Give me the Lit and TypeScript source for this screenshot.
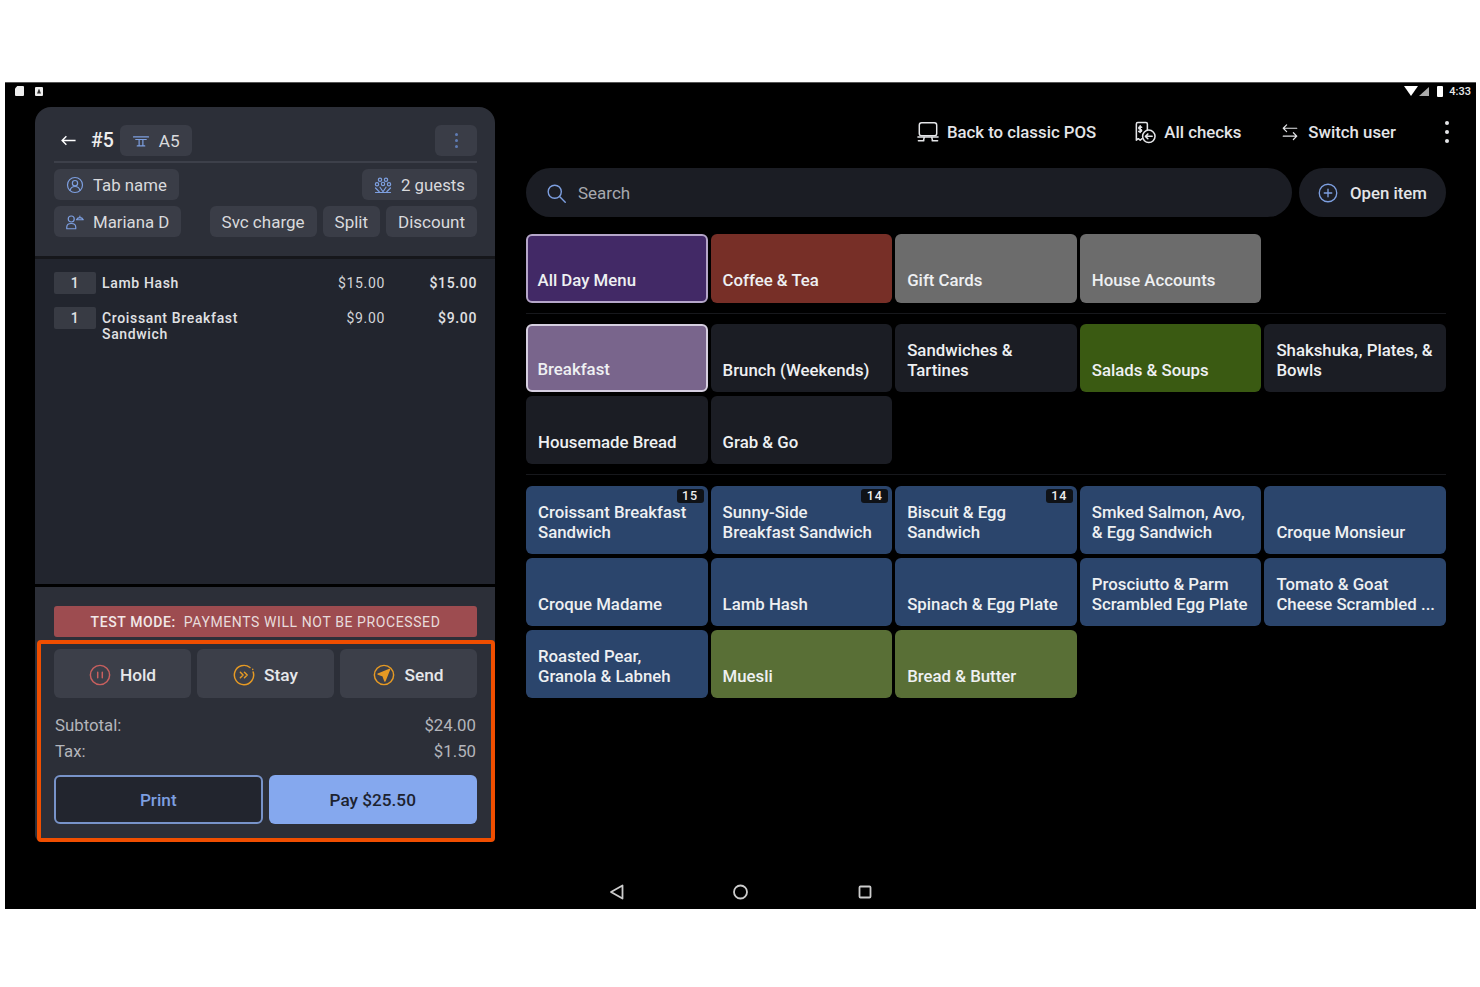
import { LitElement, html, css, svg } from "lit";
import { customElement } from "lit/decorators.js";

const ic = (w: number, body: unknown, cls = "") => html`<svg class="ic ${cls}" width=${w} height=${w} viewBox="0 0 24 24" fill="none" stroke="currentColor" stroke-width="1.6" stroke-linecap="round" stroke-linejoin="round">${body}</svg>`;

const icons = {
  table: svg`<path d="M2 6.500h20M5 10h14M9.500 10v8.500M14.500 10v8.500M7 18.500h10"/>`,
  person: svg`<circle cx="12" cy="12" r="10"/><circle cx="12" cy="9.500" r="3.500"/><path d="M5.500 19c1-3.500 3.500-5 6.500-5s5.500 1.500 6.500 5"/>`,
  guests: svg`<circle cx="8" cy="5" r="2.200"/><circle cx="16" cy="5" r="2.200"/><circle cx="12" cy="10.500" r="2.200"/><circle cx="4" cy="11" r="2.200"/><circle cx="20" cy="11" r="2.200"/><path d="M2 22h20M2 16l5 5M22 16l-5 5M8 15l4 6 4-6"/>`,
  server: svg`<circle cx="7" cy="8" r="4"/><path d="M1 21v-2c0-3 2.500-5 6-5s6 2 6 5v2zM14 9a5 5 0 0 1 9 0zM18.500 4v.5"/>`,
  pause: svg`<circle cx="12" cy="12" r="10.500"/><path d="M9.500 9v6M14.500 9v6"/>`,
  stay: svg`<path d="M18.500 3.800a10.500 10.500 0 1 0 3.500 5"/><path d="M21.500 5.800v.1"/><path d="M8 9l3 3-3 3M12.500 9l3 3-3 3"/>`,
  send: svg`<circle cx="12" cy="12" r="10.500"/><path d="M18 6L5.500 11l5.500 2 2 5.500z" fill="currentColor"/>`,
  monitor: svg`<rect x="2.500" y="2" width="19" height="14" rx="2.500"/><path d="M1 17.500h22M8 17.500l-1 4M16 17.500l1 4M1.500 21.500h6M16.500 21.500h6"/>`,
  checks: svg`<path d="M15 9V3a1.500 1.500 0 0 0-1.500-1.500H5A1.500 1.500 0 0 0 3.500 3v17l2-1.500 2 1.500 2-1.500"/><path d="M9 6.500c-1-.8-3-.5-3 .8 0 1.700 3 1 3 2.700 0 1.300-2 1.500-3 .8M7.500 5v7"/><circle cx="16.500" cy="16" r="6.500"/><path d="M20 16h-7M15.500 13.500L13 16l2.500 2.500"/>`,
  swap: svg`<path d="M3 7h18M7.500 2.500L3 7l4.500 4.500M3 17.500h18M16.500 13L21 17.500 16.500 22"/>`,
  search: svg`<circle cx="10" cy="10" r="7.500"/><path d="M15.500 15.500L22 22"/>`,
  plus: svg`<circle cx="12" cy="12" r="10.500"/><path d="M12 7.500v9M7.500 12h9"/>`,
};

const cats = [
  { t: "All Day Menu", c: "purple sel" },
  { t: "Coffee & Tea", c: "rust" },
  { t: "Gift Cards", c: "gray" },
  { t: "House Accounts", c: "gray" },
];
const subs = [
  { t: "Breakfast", c: "lilac sel" },
  { t: "Brunch (Weekends)", c: "dark" },
  { t: "Sandwiches &\nTartines", c: "dark" },
  { t: "Salads & Soups", c: "leaf" },
  { t: "Shakshuka, Plates, &\nBowls", c: "dark" },
  { t: "Housemade Bread", c: "dark" },
  { t: "Grab & Go", c: "dark" },
];
const items = [
  { t: "Croissant Breakfast\nSandwich", c: "blue", b: "15" },
  { t: "Sunny-Side\nBreakfast Sandwich", c: "blue", b: "14" },
  { t: "Biscuit & Egg\nSandwich", c: "blue", b: "14" },
  { t: "Smked Salmon, Avo,\n& Egg Sandwich", c: "blue" },
  { t: "Croque Monsieur", c: "blue" },
  { t: "Croque Madame", c: "blue" },
  { t: "Lamb Hash", c: "blue" },
  { t: "Spinach & Egg Plate", c: "blue" },
  { t: "Prosciutto & Parm\nScrambled Egg Plate", c: "blue" },
  { t: "Tomato & Goat\nCheese Scrambled ...", c: "blue" },
  { t: "Roasted Pear,\nGranola & Labneh", c: "blue" },
  { t: "Muesli", c: "olive" },
  { t: "Bread & Butter", c: "olive" },
];

@customElement("app-root")
export class AppRoot extends LitElement {
  static styles = css`
    :host { display: block; background: #fff; height: 987px; padding: 82px 4px 0 5px; box-sizing: border-box; font-family: Roboto, "Liberation Sans", sans-serif; color: #e6e7ea; overflow: hidden; }
    .screen { background: #000; height: 827px; display: flex; flex-direction: column; position: relative; border-top: 1px solid #555; box-sizing: border-box; }
    .ic { flex: none; display: block; }

    .status { height: 24px; flex: none; display: flex; align-items: center; padding: 0 5px 8px 10px; box-sizing: border-box; color: #e8e8e8; font-size: 11px; font-weight: 500; }
    .status .sd { width: 9px; height: 10px; background: #eee; border-radius: 1px; clip-path: polygon(25% 0, 100% 0, 100% 100%, 0 100%, 0 25%); }
    .status .a { width: 8px; height: 9px; background: #eee; margin-left: 11px; border-radius: 1px; position: relative; }
    .status .a::after { content: ""; position: absolute; left: 2px; top: 2px; width: 4px; height: 5px; background: #333; clip-path: polygon(50% 0, 100% 100%, 0 100%); }
    .status .sp { flex: 1; }
    .status .wifi { width: 0; height: 0; border-left: 7px solid transparent; border-right: 7px solid transparent; border-top: 10px solid #fff; }
    .status .sig { width: 0; height: 0; border-left: 10px solid transparent; border-bottom: 9px solid #aaa; margin-left: 1px; }
    .status .bat { width: 6px; height: 11px; background: #fff; margin: 0 6px 0 8px; border-radius: 1px; }

    .main { flex: 1; display: flex; padding-left: 30px; min-height: 0; align-items: flex-start; }
    .left { width: 460px; flex: none; display: flex; flex-direction: column; height: 734px; }
    .right { margin-left: 31px; width: 920px; flex: none; }

    .hd { background: #2c2f38; border-radius: 16px 16px 0 0; height: 149px; box-sizing: border-box; padding: 18px 18px 0 19px; display: flex; flex-direction: column; }
    .chip { background: #3a3d47; border-radius: 6px; height: 31px; display: inline-flex; align-items: center; padding: 0 12px; font-size: 16.800px; color: #d9dadd; box-sizing: border-box; white-space: nowrap; }
    .chip .ic { color: #7d9fe0; }
    .r1 { display: flex; align-items: center; height: 31px; }
    .r1 .back { color: #fff; width: 17px; height: 17px; margin-left: 6px; }
    .r1 .num { font-size: 19.500px; font-weight: 500; color: #eee; margin: 0 6px 0 14px; }
    .r1 .a5 { padding: 0 12px 0 12px; gap: 9px; font-size: 17.200px; }
    .r1 .more { margin-left: auto; width: 42px; justify-content: center; padding: 0; }
    .r1 .more i { display: block; width: 3px; height: 3px; border-radius: 50%; background: #5f7cb4; margin: 1.500px 0; }
    .dots { display: flex; flex-direction: column; }
    .rule { height: 2px; background: #3d404a; margin: 5px 0 6px; flex: none; }
    .r2 { display: flex; justify-content: space-between; margin-bottom: 6px; }
    .r3 { display: flex; gap: 6px; }
    .r2 .chip, .r3 .chip { padding-top: 1px; }
    .r3 .srv { margin-right: auto; }
    .r3 .wide { font-size: 17px; }
    .gap8 { gap: 9px; }

    .sep { height: 3px; background: #16171b; flex: none; }
    .list { background: #22252e; height: 325px; flex: none; padding: 13px 18px 0 19px; box-sizing: border-box; font-size: 14px; font-weight: 500; letter-spacing: .65px; line-height: 16px; color: #e0e1e4; }
    .line { display: grid; grid-template-columns: 42px 1fr 92px 92px; margin-bottom: 13px; }
    .line .q { background: #383b44; height: 22px; border-radius: 2px; display: flex; align-items: center; justify-content: center; }
    .line .n { padding: 3px 0 0 6px; width: 170px; }
    .line .p { text-align: right; padding-top: 3px; font-weight: 400; color: #d3d4d8; }
    .line .p.tot { font-weight: 500; color: #e0e1e4; }

    .bottom { background: #2c2f38; flex: 1; padding: 19px 18px 0 19px; border-radius: 0 0 6px 6px; margin-top: 3px; }
    .test { background: #9d4c50; height: 31px; border-radius: 3px; display: flex; align-items: center; justify-content: center; font-size: 14px; letter-spacing: .6px; color: #e8dcdc; }
    .test b { font-weight: 500; color: #f2e8e8; margin-right: 8px; }
    .acts { display: grid; grid-template-columns: repeat(3, 1fr); gap: 6px; margin-top: 12px; }
    .act { background: #3c3f49; height: 49px; border-radius: 6px; display: flex; align-items: center; justify-content: center; gap: 9px; font-size: 17.300px; font-weight: 500; color: #e6e7ea; padding-top: 2px; box-sizing: border-box; }
    .hold { color: #c9605f; } .amber { color: #e69a24; }
    .sum { display: flex; justify-content: space-between; font-size: 16.800px; color: #b3b5bb; padding: 0 1px; height: 26px; align-items: center; }
    .sums { margin-top: 14px; }
    .pay { display: grid; grid-template-columns: 1fr 1fr; gap: 6px; margin-top: 11px; }
    .pay > div { height: 49px; border-radius: 6px; display: flex; align-items: center; justify-content: center; font-size: 17.200px; font-weight: 500; box-sizing: border-box; padding-top: 1px; }
    .print { border: 2px solid #7893c9; color: #7d9fe0; background: #22252e; }
    .paybtn { background: #85a8ee; color: #1d2330; }
    .mark { position: absolute; left: 32px; top: 557px; width: 458px; height: 202px; box-sizing: border-box; border: 4px solid #f04e00; border-radius: 4px; pointer-events: none; }

    .top { height: 50px; display: flex; align-items: center; justify-content: flex-end; font-size: 16.800px; font-weight: 500; color: #e4e5e8; margin-bottom: 11px; }
    .top .tl { display: flex; align-items: center; gap: 8px; }
    .top .t1 { margin-right: 37px; } .top .t2 { margin-right: 40px; } .top .t3 { margin-right: 49px; gap: 9px; }
    .kebab { display: flex; flex-direction: column; gap: 5px; margin-right: -3px; }
    .kebab i { width: 4px; height: 4px; border-radius: 50%; background: #e4e5e8; display: block; }
    .sr { display: flex; gap: 7px; height: 49px; margin-bottom: 17px; }
    .search { flex: 1; background: #1b1d24; border-radius: 25px; display: flex; align-items: center; padding: 1px 0 0 20px; gap: 11px; color: #a7a9af; font-size: 17px; box-sizing: border-box; }
    .search .ic { color: #7d9fe0; }
    .open { width: 147px; background: #1b1d24; border-radius: 25px; display: flex; align-items: center; justify-content: center; gap: 12px; font-size: 16.800px; font-weight: 500; color: #e4e5e8; padding-top: 1px; box-sizing: border-box; }
    .open .ic { color: #7d9fe0; }
    .grid { display: grid; grid-template-columns: repeat(5, 1fr); gap: 4px 3px; grid-auto-rows: 68px; }
    .grid.first { grid-auto-rows: 69px; }
    .hr { height: 1px; background: #17181c; margin: 10px 0 10px; }
    .hr.b { margin: 10px 0 11px; }
    .tile { position: relative; border-radius: 6px; padding: 0 12px 12px; display: flex; align-items: flex-end; font-size: 16.800px; font-weight: 500; line-height: 19.500px; color: #eef0f2; white-space: pre; box-sizing: border-box; overflow: hidden; }
    .first .tile { padding-bottom: 13px; }
    .tile.sel, .first .tile.sel { padding: 0 9.500px 10.500px; }
    .purple { background: #422966; } .purple.sel { border: 2.500px solid #b5a6c9; }
    .rust { background: #772f27; }
    .gray { background: #6c6c6c; }
    .lilac { background: #79658c; } .lilac.sel { border: 2.500px solid #d6cfe0; }
    .dark { background: #1b1d24; }
    .leaf { background: #3a5a12; }
    .blue { background: #2b456c; }
    .olive { background: #596f36; }
    .badge { position: absolute; top: 3px; right: 4px; background: #0f1217; color: #eee; font-size: 12.500px; line-height: 14px; height: 14px; padding: 0 5.500px; border-radius: 3px; letter-spacing: .9px; }

    .nav { position: absolute; left: 0; right: 0; bottom: 7px; display: flex; justify-content: center; gap: 104px; color: #ccc; }
  `;

  private tile(t: { t: string; c: string; b?: string }) {
    return html`<div class="tile ${t.c}">${t.b ? html`<span class="badge">${t.b}</span>` : ""}${t.t}</div>`;
  }

  render() {
    return html`<div class="screen">
      <div class="status">
        <span class="sd"></span><span class="a"></span><span class="sp"></span>
        <span class="wifi"></span><span class="sig"></span><span class="bat"></span><span>4:33</span>
      </div>
      <div class="main">
        <section class="left">
          <div class="hd">
            <div class="r1">
              <svg class="ic back" viewBox="0 0 24 24" fill="none" stroke="currentColor" stroke-width="2"><path d="M22 12H3M9 6l-6 6 6 6"/></svg>
              <span class="num">#5</span>
              <span class="chip a5">${ic(18, icons.table)}A5</span>
              <span class="chip more"><span class="dots"><i></i><i></i><i></i></span></span>
            </div>
            <div class="rule"></div>
            <div class="r2">
              <span class="chip gap8">${ic(18, icons.person)}Tab name</span>
              <span class="chip gap8">${ic(18, icons.guests)}2 guests</span>
            </div>
            <div class="r3">
              <span class="chip gap8 srv">${ic(18, icons.server)}Mariana D</span>
              <span class="chip wide">Svc charge</span>
              <span class="chip wide">Split</span>
              <span class="chip wide">Discount</span>
            </div>
          </div>
          <div class="sep"></div>
          <div class="list">
            <div class="line"><span class="q">1</span><span class="n">Lamb Hash</span><span class="p">$15.00</span><span class="p tot">$15.00</span></div>
            <div class="line"><span class="q">1</span><span class="n">Croissant Breakfast Sandwich</span><span class="p">$9.00</span><span class="p tot">$9.00</span></div>
          </div>
          <div class="bottom">
            <div class="test"><b>TEST MODE:</b> PAYMENTS WILL NOT BE PROCESSED</div>
            <div class="acts">
              <div class="act"><span class="hold">${ic(22, icons.pause)}</span>Hold</div>
              <div class="act"><span class="amber">${ic(22, icons.stay)}</span>Stay</div>
              <div class="act"><span class="amber">${ic(22, icons.send)}</span>Send</div>
            </div>
            <div class="sums">
              <div class="sum"><span>Subtotal:</span><span>$24.00</span></div>
              <div class="sum"><span>Tax:</span><span>$1.50</span></div>
            </div>
            <div class="pay"><div class="print">Print</div><div class="paybtn">Pay $25.50</div></div>
          </div>
        </section>
        <section class="right">
          <div class="top">
            <span class="tl t1">${ic(22, icons.monitor)}Back to classic POS</span>
            <span class="tl t2">${ic(23, icons.checks)}All checks</span>
            <span class="tl t3">${ic(18, icons.swap)}Switch user</span>
            <span class="kebab"><i></i><i></i><i></i></span>
          </div>
          <div class="sr">
            <div class="search">${ic(21, icons.search)}Search</div>
            <div class="open">${ic(20, icons.plus)}Open item</div>
          </div>
          <div class="grid first">${cats.map((t) => this.tile(t))}</div>
          <div class="hr"></div>
          <div class="grid">${subs.map((t) => this.tile(t))}</div>
          <div class="hr b"></div>
          <div class="grid">${items.map((t) => this.tile(t))}</div>
        </section>
      </div>
      <div class="mark"></div>
      <div class="nav">
        <svg width="20" height="20" viewBox="0 0 20 20" fill="none" stroke="currentColor" stroke-width="1.800"><path d="M15.500 3.500v13L4 10z" stroke-linejoin="round"/></svg>
        <svg width="20" height="20" viewBox="0 0 20 20" fill="none" stroke="currentColor" stroke-width="1.800"><circle cx="9.500" cy="10" r="6.500"/></svg>
        <svg width="20" height="20" viewBox="0 0 20 20" fill="none" stroke="currentColor" stroke-width="1.800"><rect x="4.500" y="4.500" width="11" height="11" rx="1"/></svg>
      </div>
    </div>`;
  }
}
